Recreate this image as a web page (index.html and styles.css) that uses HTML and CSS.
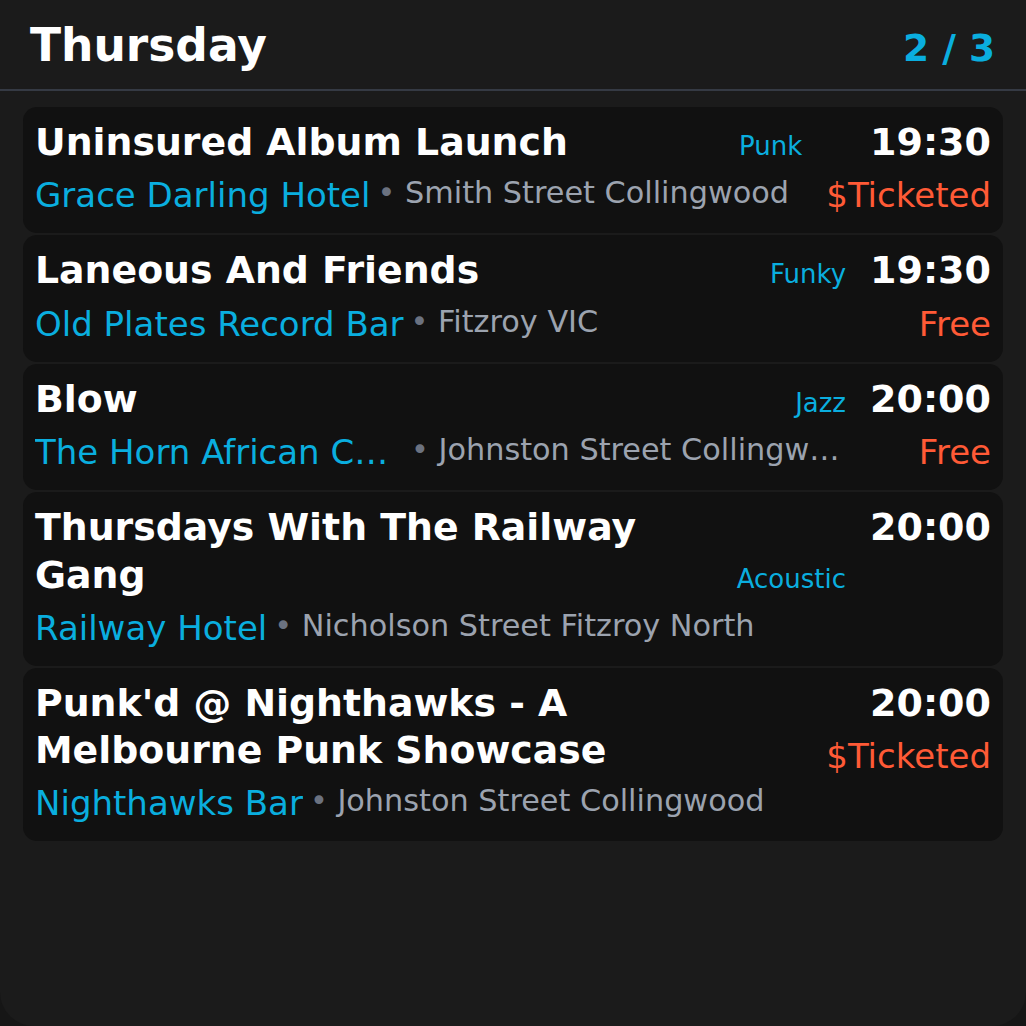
FILE: index.html
```html
<!DOCTYPE html>
<html lang="en">
<head>
<meta charset="utf-8">
<title>Thursday</title>
<link rel="stylesheet" href="styles.css">
</head>
<body>
<div class="screen">
  <header class="header">
    <h1 class="day">Thursday</h1>
    <div class="pager">2 / 3</div>
  </header>
  <main class="list">
    <article class="card">
      <div class="main">
        <div class="top">
          <div class="title">Uninsured Album Launch</div>
          <div class="genre">Punk</div>
        </div>
        <div class="place">
          <span class="venue">Grace Darling Hotel</span>
          <span class="addr"><span class="dot">•</span> Smith Street Collingwood</span>
        </div>
      </div>
      <div class="side">
        <div class="time">19:30</div>
        <div class="price">$Ticketed</div>
      </div>
    </article>
    <article class="card">
      <div class="main">
        <div class="top">
          <div class="title">Laneous And Friends</div>
          <div class="genre">Funky</div>
        </div>
        <div class="place">
          <span class="venue">Old Plates Record Bar</span>
          <span class="addr"><span class="dot">•</span> Fitzroy VIC</span>
        </div>
      </div>
      <div class="side">
        <div class="time">19:30</div>
        <div class="price">Free</div>
      </div>
    </article>
    <article class="card">
      <div class="main">
        <div class="top">
          <div class="title">Blow</div>
          <div class="genre">Jazz</div>
        </div>
        <div class="place">
          <span class="venue">The Horn African Cultural Centre</span>
          <span class="addr"><span class="dot">•</span> Johnston Street Collingwood</span>
        </div>
      </div>
      <div class="side">
        <div class="time">20:00</div>
        <div class="price">Free</div>
      </div>
    </article>
    <article class="card">
      <div class="main">
        <div class="top">
          <div class="title">Thursdays With The Railway Gang</div>
          <div class="genre">Acoustic</div>
        </div>
        <div class="place">
          <span class="venue">Railway Hotel</span>
          <span class="addr"><span class="dot">•</span> Nicholson Street Fitzroy North</span>
        </div>
      </div>
      <div class="side">
        <div class="time">20:00</div>
      </div>
    </article>
    <article class="card">
      <div class="main">
        <div class="top">
          <div class="title">Punk'd @ Nighthawks - A Melbourne Punk Showcase</div>
        </div>
        <div class="place">
          <span class="venue">Nighthawks Bar</span>
          <span class="addr"><span class="dot">•</span> Johnston Street Collingwood</span>
        </div>
      </div>
      <div class="side">
        <div class="time">20:00</div>
        <div class="price">$Ticketed</div>
      </div>
    </article>
  </main>
</div>
</body>
</html>
```
FILE: styles.css
```css
* { box-sizing: border-box; }
html, body {
  margin: 0;
  padding: 0;
  background: #161616;
}
body {
  font-family: "DejaVu Sans", "Noto Sans", sans-serif;
  color: #ffffff;
}
.screen {
  width: 1026px;
  height: 1026px;
  background: #1b1b1b;
  border-radius: 0 0 34px 34px;
  overflow: hidden;
}
.header {
  display: flex;
  justify-content: space-between;
  align-items: baseline;
  padding: 18px 31px 14px 30px;
  border-bottom: 2px solid #353a44;
}
.day {
  margin: 0;
  font-size: 45.5px;
  line-height: 1.25;
  font-weight: 700;
  color: #ffffff;
}
.pager {
  font-size: 37.5px;
  font-weight: 700;
  color: #0aaedf;
}
.list {
  display: flex;
  flex-direction: column;
  gap: 2px;
  padding: 16px 23px;
}
.card {
  display: flex;
  gap: 24px;
  background: #111111;
  border-radius: 14px;
  padding: 12px;
}
.main {
  flex: 1;
  min-width: 0;
  display: flex;
  flex-direction: column;
  gap: 4px;
}
.top {
  display: flex;
  align-items: last baseline;
  justify-content: space-between;
  gap: 20px;
}
.title {
  font-size: 37.8px;
  line-height: 1.25;
  font-weight: 700;
  color: #ffffff;
}
.genre {
  flex: none;
  font-size: 26px;
  line-height: 1.25;
  color: #0aaedf;
}
.place {
  display: flex;
  min-width: 0;
  white-space: nowrap;
  font-size: 34px;
  line-height: 1.5;
}
.venue {
  flex: 0 1 auto;
  min-width: 0;
  max-width: 45.5%;
  overflow: hidden;
  text-overflow: ellipsis;
  color: #0aaedf;
}
.addr {
  flex: 0 1 auto;
  min-width: 0;
  overflow: hidden;
  text-overflow: ellipsis;
  margin-left: 7px;
  margin-right: 6px;
  font-size: 30.3px;
  color: #9ca3af;
}
.dot {
  color: #6b7280;
}
.side {
  flex: none;
  display: flex;
  flex-direction: column;
  align-items: flex-end;
  gap: 4px;
}
.time {
  font-size: 38px;
  line-height: 1.25;
  font-weight: 700;
  color: #ffffff;
}
.price {
  font-size: 34px;
  line-height: 1.5;
  color: #ff5a36;
}
```
